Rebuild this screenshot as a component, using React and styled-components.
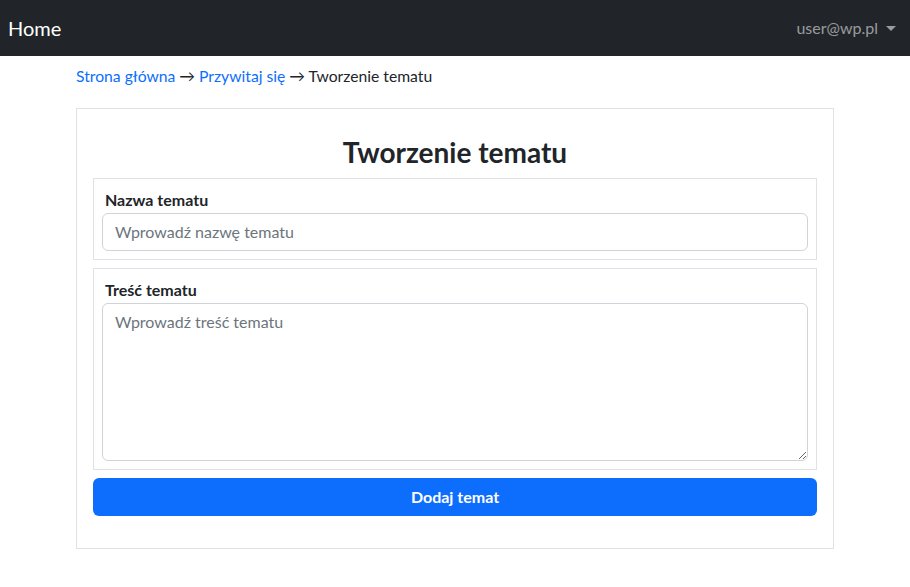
import React from 'react';
import styled, { createGlobalStyle } from 'styled-components';

const GlobalStyle = createGlobalStyle`
  body {
    margin: 0;
    font-family: Lato, "Liberation Sans", sans-serif;
    font-size: 16px;
    line-height: 1.5;
    color: #212529;
    background: #fff;
  }
  * { box-sizing: border-box; }
`

const Navbar = styled.nav`
  height: 56px;
  background: #212529;
  display: flex;
  align-items: center;
  justify-content: space-between;
  padding: 0 8px;
`
const Brand = styled.a`
  color: #fff;
  font-size: 20px;
  text-decoration: none;
`
const UserMenu = styled.div`
  color: rgba(255, 255, 255, 0.55);
  font-size: 16px;
  display: flex;
  align-items: center;
  padding-right: 6px;
  &::after {
    content: "";
    margin-left: 8px;
    border-top: 5px solid rgba(255, 255, 255, 0.55);
    border-left: 5px solid transparent;
    border-right: 5px solid transparent;
  }
`
const Container = styled.main`
  width: 758px;
  margin: 0 auto;
`
const Breadcrumb = styled.div`
  padding: 9px 0 0;
  height: 52px;
  font-size: 15.7px;
  a {
    color: #0d6efd;
    text-decoration: none;
  }
`
const Card = styled.section`
  border: 1px solid #dee2e6;
  padding: 16px 16px 32px;
`
const Title = styled.h3`
  text-align: center;
  font-size: 28px;
  font-weight: 700;
  margin: 11px 0 8px;
  line-height: 1.2;
`
const Group = styled.div`
  border: 1px solid #dee2e6;
  padding: 9px 8px 8px;
  margin-bottom: 8px;
`
const Label = styled.label`
  display: block;
  font-weight: 700;
  padding-left: 3px;
  margin-bottom: 1px;
`
const fieldCss = `
  display: block;
  width: 100%;
  font: inherit;
  color: #212529;
  border: 1px solid #ced4da;
  border-radius: 6px;
  padding: 6px 12px;
  &::placeholder { color: #6c757d; }
`
const Input = styled.input`
  ${fieldCss}
  height: 38px;
`
const TextArea = styled.textarea`
  ${fieldCss}
  height: 158px;
  resize: vertical;
`
const Button = styled.button`
  display: block;
  width: 100%;
  height: 38px;
  border: none;
  border-radius: 6px;
  background: #0d6efd;
  color: #fff;
  font: inherit;
  font-weight: 700;
`

export default function App() {
  return (
    <>
      <GlobalStyle />
      <Navbar>
        <Brand href="#">Home</Brand>
        <UserMenu>user@wp.pl</UserMenu>
      </Navbar>
      <Container>
        <Breadcrumb>
          <a href="#">Strona główna</a> → <a href="#">Przywitaj się</a> → Tworzenie tematu
        </Breadcrumb>
        <Card>
          <Title>Tworzenie tematu</Title>
          <Group>
            <Label>Nazwa tematu</Label>
            <Input placeholder="Wprowadź nazwę tematu" />
          </Group>
          <Group>
            <Label>Treść tematu</Label>
            <TextArea placeholder="Wprowadź treść tematu" />
          </Group>
          <Button>Dodaj temat</Button>
        </Card>
      </Container>
    </>
  );
}
